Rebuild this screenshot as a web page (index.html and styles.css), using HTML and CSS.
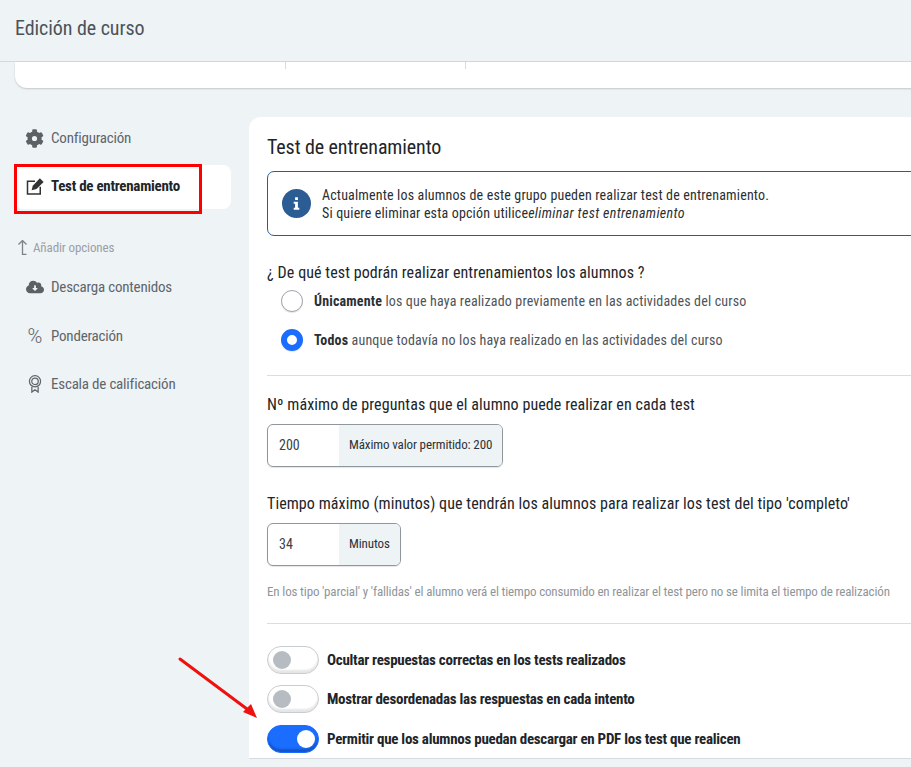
FILE: index.html
```html
<!DOCTYPE html>
<html lang="es">
<head>
<meta charset="utf-8">
<title>Edición de curso</title>
<link rel="stylesheet" href="styles.css">
</head>
<body>
<div class="page">
  <header class="topbar"><h1>Edición de curso</h1></header>
  <div class="summary">
    <span class="cell c1"></span><span class="cell c2"></span><span class="cell c3"></span>
  </div>
  <div class="layout">
    <nav class="side">
      <a class="item">
        <svg class="ico gear" viewBox="0 0 512 512"><path d="M487 316l-42-25a190 190 0 0 0 0-70l42-25c5-3 7-8 5-14-11-35-30-67-54-93-4-4-10-5-14-3l-42 25a188 188 0 0 0-61-35V27c0-6-4-11-9-12-36-8-73-8-108 0-5 1-9 6-9 12v49a188 188 0 0 0-61 35L92 86c-5-3-11-2-14 3-25 26-43 58-54 93-2 6 0 11 5 14l42 25a190 190 0 0 0 0 70l-42 25c-5 3-7 8-5 14 11 35 30 67 54 93 4 4 10 5 14 3l42-25a188 188 0 0 0 61 35v49c0 6 4 11 9 12 36 8 73 8 108 0 5-1 9-6 9-12v-49a188 188 0 0 0 61-35l42 25c5 3 11 2 14-3 25-26 43-58 54-93 2-6 0-11-5-14zM256 326a70 70 0 1 1 0-140 70 70 0 0 1 0 140z"/></svg>
        <span>Configuración</span>
      </a>
      <a class="item active">
        <svg class="ico" viewBox="0 0 24 24"><path class="edit-box" d="M12 5.500H2V22.500H19V13"/><path d="M7.500 17.500l1.500-6L18.500 1.500l5 5L14 16z"/></svg>
        <span>Test de entrenamiento</span>
      </a>
      <div class="add">
        <svg class="add-ico" viewBox="0 0 9 15"><path d="M.5 4.500L4.500.5l4 4M4.500.5V14.500H8.500"/></svg>
        <span>Añadir opciones</span>
      </div>
      <a class="item opt">
        <svg class="ico" viewBox="0 0 640 512"><path d="M537.600 226.600c4.100-10.700 6.400-22.400 6.400-34.600 0-53-43-96-96-96-19.700 0-38.100 6-53.300 16.200C367 64.200 315.300 32 256 32c-88.400 0-160 71.600-160 160 0 2.700.1 5.400.2 8.100C40.200 219.800 0 273.200 0 336c0 79.500 64.500 144 144 144h368c70.700 0 128-57.300 128-128 0-61.900-44-113.600-102.400-125.400zM404.700 316.700l-73.400 73.400c-6.200 6.200-16.400 6.200-22.600 0l-73.400-73.400c-10.100-10.100-2.900-27.300 11.300-27.300H288V208c0-8.800 7.200-16 16-16h32c8.800 0 16 7.200 16 16v81.400h41.400c14.300 0 21.400 17.200 11.300 27.300z"/></svg>
        <span>Descarga contenidos</span>
      </a>
      <a class="item opt">
        <span class="pct">%</span>
        <span>Ponderación</span>
      </a>
      <a class="item opt">
        <svg class="ico line" viewBox="0 0 16 20"><circle cx="8" cy="7" r="6.200"/><circle cx="8" cy="7" r="3.600"/><path d="M4.500 13v6l3.500-2.500L11.500 19v-6"/></svg>
        <span>Escala de calificación</span>
      </a>
    </nav>
    <main class="panel">
      <h2>Test de entrenamiento</h2>
      <div class="notice">
        <span class="info-dot"><svg viewBox="0 0 10 18"><path d="M3 0h4v4H3zM1 6.500h6V15h2v3H1v-3h2V9.500H1z"/></svg></span>
        <p>Actualmente los alumnos de este grupo pueden realizar test de entrenamiento.<br>Si quiere eliminar esta opción utilice<em>eliminar test entrenamiento</em></p>
      </div>
      <p class="label q">¿ De qué test podrán realizar entrenamientos los alumnos ?</p>
      <div class="radio r1"><span class="dot"></span><span><b>Únicamente</b> los que haya realizado previamente en las actividades del curso</span></div>
      <div class="radio r2"><span class="dot on"></span><span><b>Todos</b> aunque todavía no los haya realizado en las actividades del curso</span></div>
      <hr class="rule rule1">
      <p class="label">Nº máximo de preguntas que el alumno puede realizar en cada test</p>
      <div class="group"><span class="val">200</span><span class="unit">Máximo valor permitido: 200</span></div>
      <p class="label t2">Tiempo máximo (minutos) que tendrán los alumnos para realizar los test del tipo 'completo'</p>
      <div class="group"><span class="val">34</span><span class="unit">Minutos</span></div>
      <p class="hint">En los tipo 'parcial' y 'fallidas' el alumno verá el tiempo consumido en realizar el test pero no se limita el tiempo de realización</p>
      <hr class="rule rule2">
      <div class="toggle"><span class="sw"></span><b>Ocultar respuestas correctas en los tests realizados</b></div>
      <div class="toggle"><span class="sw"></span><b>Mostrar desordenadas las respuestas en cada intento</b></div>
      <div class="toggle last"><span class="sw on"></span><b>Permitir que los alumnos puedan descargar en PDF los test que realicen</b></div>
    </main>
  </div>
  <div class="callout"></div>
  <svg class="arrow" viewBox="0 0 79 62"><path class="shaft" d="M2 2L69 52"/><path class="head" d="M79 61L65 55L73 47z"/></svg>
</div>
</body>
</html>
```
FILE: styles.css
```css
* { box-sizing: border-box; }
html, body { margin: 0; padding: 0; height: 100%; }
body { background: #eef3f6; font-family: Roboto, "Liberation Sans", sans-serif; font-stretch: 87.500%; color: #212529; overflow: hidden; }
.page { position: relative; width: 911px; height: 767px; overflow: hidden; }
.topbar { height: 62px; padding: 16px 15px 0; border-bottom: 1px solid #d2d8dc; }
.topbar h1 { margin: 0; font-size: 20px; line-height: 24px; font-weight: 400; letter-spacing: -.06px; color: #4c5257; }
.summary { display: flex; height: 26px; margin-left: 15px; width: 920px; background: #fff; border-radius: 0 0 12px 12px; box-shadow: 0 1px 2px rgba(0,0,0,.18); }
.cell { height: 7px; border-right: 1px solid #d6dadd; }
.c1 { width: 271px; }
.c2 { width: 180px; }
.c3 { width: 1px; border: 0; }
.layout { display: flex; margin-top: 29px; height: 680px; }
.side { width: 249px; flex: none; padding: 0 18px 0 15px; }
.item { display: flex; align-items: center; height: 44px; padding-left: 11px; gap: 7px; font-size: 15px; letter-spacing: -.2px; color: #5f656a; border-radius: 8px; }
.item.active { margin-top: 4px; background: #fff; color: #212529; font-weight: 700; letter-spacing: -.27px; }
.item.opt { height: 48.500px; }
.item:first-child { padding-bottom: 2px; }
.item.active { padding-bottom: 2px; }
.ico { width: 18px; height: 18px; flex: none; fill: #5c6166; }
.gear { width: 19px; height: 19px; margin-left: -1px; }
.edit-box { fill: none; stroke: #333; stroke-width: 2; }
.active .ico { fill: #333; }
.line { fill: none; stroke: #5f656a; stroke-width: 1.400; }
.pct { width: 18px; font-size: 20px; font-weight: 300; font-stretch: 100%; letter-spacing: 0; text-align: center; flex: none; color: #5f656a; }
.add { display: flex; align-items: center; gap: 6px; margin-top: 27px; margin-bottom: 5px; padding: 0 0 0 3px; font-size: 13px; letter-spacing: -.13px; color: #9aa0a5; height: 22px; }
.add-ico { width: 9px; height: 15px; flex: none; fill: none; stroke: #7d8388; stroke-width: 1.300; }
.panel { flex: 1; height: 642px; padding: 18px 18px 0; background: #fff; border-radius: 12px 0 0 0; border-bottom: 1px solid #d5dbe0; overflow: hidden; min-width: 0; }
.panel h2 { margin: 0; font-size: 20px; line-height: 24px; font-weight: 400; letter-spacing: -.1px; color: #212529; }
.notice { display: flex; align-items: center; height: 65px; margin-top: 12px; width: 700px; padding-left: 14px; gap: 11px; border: 1px solid #2c5c94; border-radius: 7px; }
.info-dot { width: 29px; height: 29px; flex: none; display: flex; align-items: center; justify-content: center; background: #2c5c94; border-radius: 50%; }
.info-dot svg { width: 7px; height: 13px; fill: #fff; }
.notice p { margin: 0; font-size: 14px; line-height: 18px; letter-spacing: .16px; color: #2a2f33; white-space: nowrap; }
.notice em { letter-spacing: .34px; }
.label { margin: 0; font-size: 16px; line-height: 20px; letter-spacing: .08px; color: #212529; white-space: nowrap; }
.q { margin-top: 27px; }
.radio { display: flex; align-items: center; gap: 11px; padding-left: 14px; font-size: 14px; letter-spacing: .16px; color: #4e5459; white-space: nowrap; height: 22px; }
.radio b { color: #2a2f33; }
.r1 { margin-top: 7px; }
.r2 { margin-top: 17px; }
.dot { width: 22px; height: 22px; flex: none; border: 1px solid #9fa5aa; border-radius: 50%; background: #fff; box-shadow: 0 1px 1px rgba(0,0,0,.1); }
.dot.on { border: 6px solid #1a6dff; }
.rule { margin: 0; border: 0; border-top: 1px solid #d9dde0; width: 680px; }
.rule1 { margin-top: 24px; }
.label + .group { margin-top: 9px; }
.rule1 + .label { margin-top: 19px; }
.group { display: inline-flex; height: 43px; border: 1px solid #8f969c; border-radius: 6px; overflow: hidden; box-shadow: 0 1px 1px rgba(0,0,0,.1); font-size: 13px; letter-spacing: -.12px; vertical-align: top; }
.val { width: 71px; padding-left: 11px; line-height: 41px; font-size: 14px; letter-spacing: 0; color: #3c4146; }
.unit { padding: 0 10px; line-height: 39px; background: #eef3f6; color: #2d3236; }
.t2 { margin-top: 27px; }
.hint { margin: 18px 0 0; font-size: 13px; line-height: 16px; letter-spacing: -.15px; color: #8f959a; white-space: nowrap; }
.rule2 { margin-top: 23px; }
.toggle { display: flex; align-items: center; gap: 8px; height: 28px; margin-top: 11px; font-size: 15px; letter-spacing: -.26px; color: #212529; white-space: nowrap; }
.toggle.last { margin-top: 12px; }
.rule2 + .toggle { margin-top: 22px; }
.sw { position: relative; width: 52px; height: 28px; flex: none; border: 1px solid #c8cdd1; border-radius: 14px; background: #fff; box-shadow: inset 0 -3px 2px rgba(0,0,0,.1); }
.sw::after { content: ""; position: absolute; left: 5px; top: 4px; width: 18px; height: 18px; border-radius: 50%; background: #b6bcc2; }
.sw.on { background: #1a6dff; border-color: #1a6dff; box-shadow: inset 0 -3px 2px rgba(0,0,0,.22); }
.sw.on::after { left: 29px; background: #fff; }
.callout { position: absolute; left: 14px; top: 164px; width: 188px; height: 50px; border: 3px solid #ff0000; }
.arrow { position: absolute; left: 178px; top: 657px; width: 79px; height: 62px; overflow: visible; }
.shaft { fill: none; stroke: #f01010; stroke-width: 3; stroke-linecap: round; }
.head { fill: #f01010; }
```
